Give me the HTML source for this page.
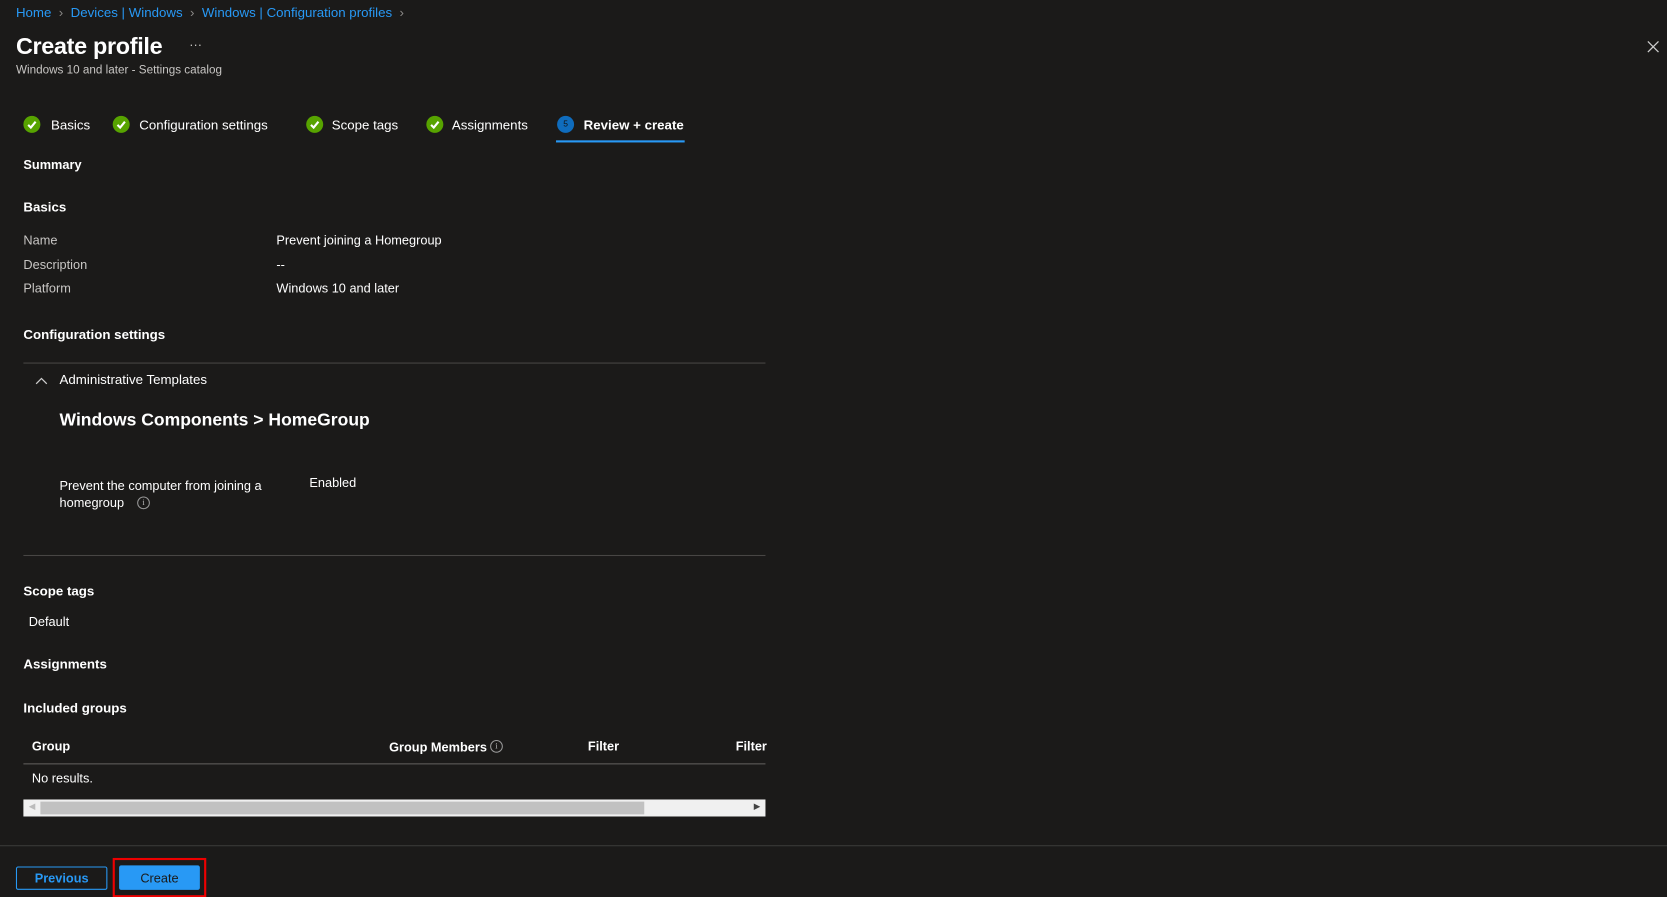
<!DOCTYPE html>
<html><head><meta charset="utf-8"><style>
html,body{margin:0;padding:0;background:#1b1a19;width:1667px;height:897px;overflow:hidden}
#w{position:absolute;left:0;top:0;width:1568px;height:844px;transform:scale(1.06314);transform-origin:0 0;font-family:"Liberation Sans",sans-serif;color:#fff;font-size:12px}
.a{position:absolute;white-space:nowrap;line-height:1}
.b{font-weight:bold}
.l{color:#c8c6c4}
.lnk{color:#2899f5}
.chk{position:absolute;width:16px;height:16px;border-radius:50%;background:#57a300}
.hr{position:absolute;height:1px;background:#484644}
.info{position:absolute;width:10px;height:10px;border:1px solid #999;border-radius:50%;font-size:8px;line-height:10px;text-align:center;color:#bbb;font-family:"Liberation Serif",serif}
</style></head><body><div id="w">
<div class="a lnk" style="left:15px;top:6px;font-size:12.5px">Home <span style="color:#8a8886">&nbsp;›&nbsp;</span> Devices | Windows <span style="color:#8a8886">&nbsp;›&nbsp;</span> Windows | Configuration profiles <span style="color:#8a8886">&nbsp;›</span></div>
<div class="a" style="left:15px;top:33px;font-size:22px;font-weight:bold;letter-spacing:-0.3px">Create profile</div>
<div class="a l" style="left:178px;top:36px;font-size:12px">···</div>
<div class="a l" style="left:15px;top:61px;font-size:11px">Windows 10 and later - Settings catalog</div>
<svg style="position:absolute;left:1549px;top:38px" width="12" height="12"><path d="M1 1L11 11M11 1L1 11" stroke="#ccc" stroke-width="1.2"/></svg>

<div class="chk" style="left:22px;top:109px"></div><svg style="position:absolute;left:22px;top:109px" width="16" height="16"><path d="M4.5 8.5L7 11L11.5 5.5" stroke="#fff" stroke-width="2" fill="none"/></svg>
<div class="a" style="left:48px;top:112px;font-size:12.5px">Basics</div>
<div class="chk" style="left:106px;top:109px"></div><svg style="position:absolute;left:106px;top:109px" width="16" height="16"><path d="M4.5 8.5L7 11L11.5 5.5" stroke="#fff" stroke-width="2" fill="none"/></svg>
<div class="a" style="left:131px;top:112px;font-size:12.5px">Configuration settings</div>
<div class="chk" style="left:288px;top:109px"></div><svg style="position:absolute;left:288px;top:109px" width="16" height="16"><path d="M4.5 8.5L7 11L11.5 5.5" stroke="#fff" stroke-width="2" fill="none"/></svg>
<div class="a" style="left:312px;top:112px;font-size:12.5px">Scope tags</div>
<div class="chk" style="left:401px;top:109px"></div><svg style="position:absolute;left:401px;top:109px" width="16" height="16"><path d="M4.5 8.5L7 11L11.5 5.5" stroke="#fff" stroke-width="2" fill="none"/></svg>
<div class="a" style="left:425px;top:112px;font-size:12.5px">Assignments</div>
<div class="chk" style="left:524px;top:109px;background:#0f6cbd"></div><div class="a" style="left:524px;top:113px;width:16px;text-align:center;font-size:8px;color:#111">5</div>
<div class="a b" style="left:549px;top:112px;font-size:12.5px">Review + create</div>
<div style="position:absolute;left:523px;top:132px;width:121px;height:2px;background:#2899f5"></div>

<div class="a b" style="left:22px;top:149px">Summary</div>
<div class="a b" style="left:22px;top:189px;font-size:12.5px">Basics</div>
<div class="a l" style="left:22px;top:220px">Name</div><div class="a" style="left:260px;top:220px">Prevent joining a Homegroup</div>
<div class="a l" style="left:22px;top:243px">Description</div><div class="a" style="left:260px;top:243px">--</div>
<div class="a l" style="left:22px;top:265px">Platform</div><div class="a" style="left:260px;top:265px">Windows 10 and later</div>
<div class="a b" style="left:22px;top:309px;font-size:12.5px">Configuration settings</div>
<div class="hr" style="left:22px;top:341px;width:698px"></div>
<svg style="position:absolute;left:33px;top:353px" width="12" height="10"><path d="M1 8L6 3L11 8" stroke="#ccc" stroke-width="1.2" fill="none"/></svg>
<div class="a" style="left:56px;top:351px;font-size:12.5px">Administrative Templates</div>
<div class="a b" style="left:56px;top:387px;font-size:16.5px">Windows Components &gt; HomeGroup</div>
<div class="a" style="left:56px;top:451px">Prevent the computer from joining a</div>
<div class="a" style="left:56px;top:467px">homegroup</div>
<div class="info" style="left:129px;top:467px">i</div>
<div class="a" style="left:291px;top:448px">Enabled</div>
<div class="hr" style="left:22px;top:522px;width:698px"></div>

<div class="a b" style="left:22px;top:550px;font-size:12.5px">Scope tags</div>
<div class="a" style="left:27px;top:579px">Default</div>
<div class="a b" style="left:22px;top:619px;font-size:12.5px">Assignments</div>
<div class="a b" style="left:22px;top:660px;font-size:12.5px">Included groups</div>
<div class="a b" style="left:30px;top:696px">Group</div>
<div class="a b" style="left:366px;top:697px">Group Members</div>
<div class="info" style="left:461px;top:696px">i</div>
<div class="a b" style="left:553px;top:696px">Filter</div>
<div class="a b" style="left:692px;top:696px">Filter</div>
<div class="hr" style="left:22px;top:718px;width:698px;background:#605e5c"></div>
<div class="a" style="left:30px;top:726px">No results.</div>
<div style="position:absolute;left:22px;top:752px;width:698px;height:16px;background:#f0f0f0"></div>
<div style="position:absolute;left:38px;top:754px;width:568px;height:12px;background:#c1c1c1"></div>
<div class="a" style="left:27px;top:755px;font-size:8px;color:#bbb">◀</div>
<div class="a" style="left:709px;top:755px;font-size:8px;color:#444">▶</div>

<div class="hr" style="left:0;top:795px;width:1568px;background:#3b3a39"></div>
<div style="position:absolute;left:15px;top:815px;width:84px;height:20px;border:1px solid #2899f5;border-radius:2px"></div>
<div class="a b lnk" style="left:15px;top:820px;width:86px;text-align:center">Previous</div>
<div style="position:absolute;left:106px;top:807px;width:84px;height:33px;border:2px solid #e00"></div>
<div style="position:absolute;left:112px;top:814px;width:76px;height:23px;background:#2899f5;border-radius:2px"></div>
<div class="a" style="left:112px;top:820px;width:76px;text-align:center;color:#1b1a19">Create</div>
</div></body></html>
